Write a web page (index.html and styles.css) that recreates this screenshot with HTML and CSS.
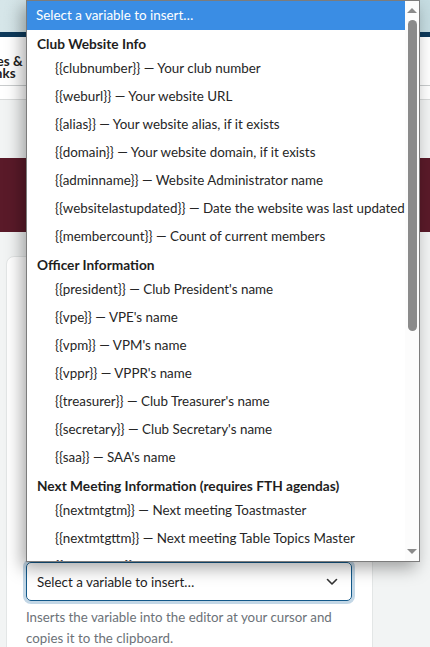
FILE: index.html
```html
<!DOCTYPE html>
<html>
<head>
    <meta charset="UTF-8">
    <title>Website Variables</title>
    <link rel="stylesheet" href="styles.css">
</head>
<body>
    <div class="top-band"></div>
    <div class="navy-line"></div>
    <nav class="main-nav">
        <div class="nav-item">Roles &amp;<br>Links</div>
    </nav>
    <div class="sub-bar"></div>
    <div class="hero"></div>

    <main class="content">
        <section class="card">
            <div class="editor-space"></div>
            <div class="select-box">
                <span>Select a variable to insert…</span>
                <svg class="chevron" width="12" height="8" viewBox="0 0 12 8">
                    <path d="M1.5 1.5 L6 6 L10.5 1.5" fill="none" stroke="#333" stroke-width="1.6" stroke-linecap="round" stroke-linejoin="round"/>
                </svg>
            </div>
            <p class="help">Inserts the variable into the editor at your cursor and copies it to the clipboard.</p>
        </section>
    </main>

    <!-- open list of the select -->
    <div class="dropdown">
        <div class="dropdown-list">
            <div class="opt selected">Select a variable to insert…</div>

            <div class="group">Club Website Info</div>
            <div class="opt">{{clubnumber}} — Your club number</div>
            <div class="opt">{{weburl}} — Your website URL</div>
            <div class="opt">{{alias}} — Your website alias, if it exists</div>
            <div class="opt">{{domain}} — Your website domain, if it exists</div>
            <div class="opt">{{adminname}} — Website Administrator name</div>
            <div class="opt">{{websitelastupdated}} — Date the website was last updated</div>
            <div class="opt">{{membercount}} — Count of current members</div>

            <div class="group">Officer Information</div>
            <div class="opt">{{president}} — Club President's name</div>
            <div class="opt">{{vpe}} — VPE's name</div>
            <div class="opt">{{vpm}} — VPM's name</div>
            <div class="opt">{{vppr}} — VPPR's name</div>
            <div class="opt">{{treasurer}} — Club Treasurer's name</div>
            <div class="opt">{{secretary}} — Club Secretary's name</div>
            <div class="opt">{{saa}} — SAA's name</div>

            <div class="group">Next Meeting Information (requires FTH agendas)</div>
            <div class="opt">{{nextmtgtm}} — Next meeting Toastmaster</div>
            <div class="opt">{{nextmtgttm}} — Next meeting Table Topics Master</div>
            <div class="opt">{{nextmtgge}} — Next meeting General Evaluator</div>
        </div>
        <div class="scrollbar">
            <div class="arrow arrow-up"></div>
            <div class="thumb"></div>
            <div class="arrow arrow-down"></div>
        </div>
    </div>
</body>
</html>
```

FILE: styles.css
```css
body {
    font-family: Lato, "Noto Sans", sans-serif;
    margin: 0;
    background-color: #f2f4f4;
    color: #333;
    position: relative;
    overflow: hidden;
    height: 647px;
}

.top-band {
    height: 32px;
    background: linear-gradient(90deg, #d6e6e9, #c6dde2);
}

.navy-line {
    height: 5px;
    background-color: #0e3a5b;
}

.main-nav {
    height: 49px;
    background-color: #fff;
    border-bottom: 1px solid #c9cccd;
    padding-top: 18px;
    box-sizing: border-box;
}

.nav-item {
    width: 60px;
    margin-left: -30px;
    text-align: center;
    font-weight: bold;
    font-size: 13.5px;
    line-height: 12px;
    color: #222;
}

.sub-bar {
    height: 13px;
    background-color: #fff;
    border-bottom: 1px solid #d8dada;
}

.hero {
    height: 74px;
    margin-top: 58px;
    background-color: #5a1a29;
}

.content {
    padding: 24px 0 0 6px;
}

/* Card */
.card {
    width: 367px;
    height: 420px;
    box-sizing: border-box;
    background-color: #fff;
    border: 1px solid #e3e6e6;
    border-radius: 8px;
    padding: 0 20px 0 19px;
}

.editor-space {
    height: 305px;
}

.select-box {
    display: flex;
    justify-content: space-between;
    align-items: center;
    height: 39px;
    box-sizing: border-box;
    padding: 0 13px 0 10px;
    border: 1px solid #13598a;
    border-radius: 5px;
    box-shadow: 0 0 0 3px #c3d7e6;
    font-size: 13.4px;
    color: #1e1e1e;
}

.help {
    margin: 6px 0 0;
    font-size: 13.3px;
    line-height: 21px;
    color: #6c7278;
}

/* Open select list */
.dropdown {
    position: absolute;
    top: 0;
    left: 26px;
    width: 394px;
    height: 562px;
    box-sizing: border-box;
    display: flex;
    background-color: #fff;
    border: 1px solid #7c7c7c;
    box-shadow: -4px 6px 16px rgba(0,0,0,0.35);
    overflow: hidden;
}

.dropdown-list {
    flex: 1;
    min-width: 0;
    overflow: hidden;
    font-size: 13.4px;
    color: #262626;
}

.opt {
    height: 28px;
    line-height: 27px;
    padding-left: 28px;
    white-space: nowrap;
}

.opt.selected {
    height: 29px;
    line-height: 29px;
    padding-left: 9px;
    background-color: #3a8de4;
    color: #fff;
}

.group {
    height: 25px;
    line-height: 27px;
    padding-left: 10px;
    font-size: 13.7px;
    font-weight: bold;
    color: #1e1e1e;
    white-space: nowrap;
}

.scrollbar {
    flex: 0 0 14px;
    display: flex;
    flex-direction: column;
    align-items: center;
    background-color: #fcfcfc;
}

.arrow {
    width: 0;
    height: 0;
    border-left: 5px solid transparent;
    border-right: 5px solid transparent;
}

.arrow-up {
    margin-top: 7px;
    border-bottom: 5px solid #8a8a8a;
}

.arrow-down {
    margin-top: auto;
    margin-bottom: 7px;
    border-top: 5px solid #8a8a8a;
}

.thumb {
    width: 9px;
    height: 311px;
    margin-top: 7px;
    border-radius: 5px;
    background-color: #8b8b8b;
}
```
